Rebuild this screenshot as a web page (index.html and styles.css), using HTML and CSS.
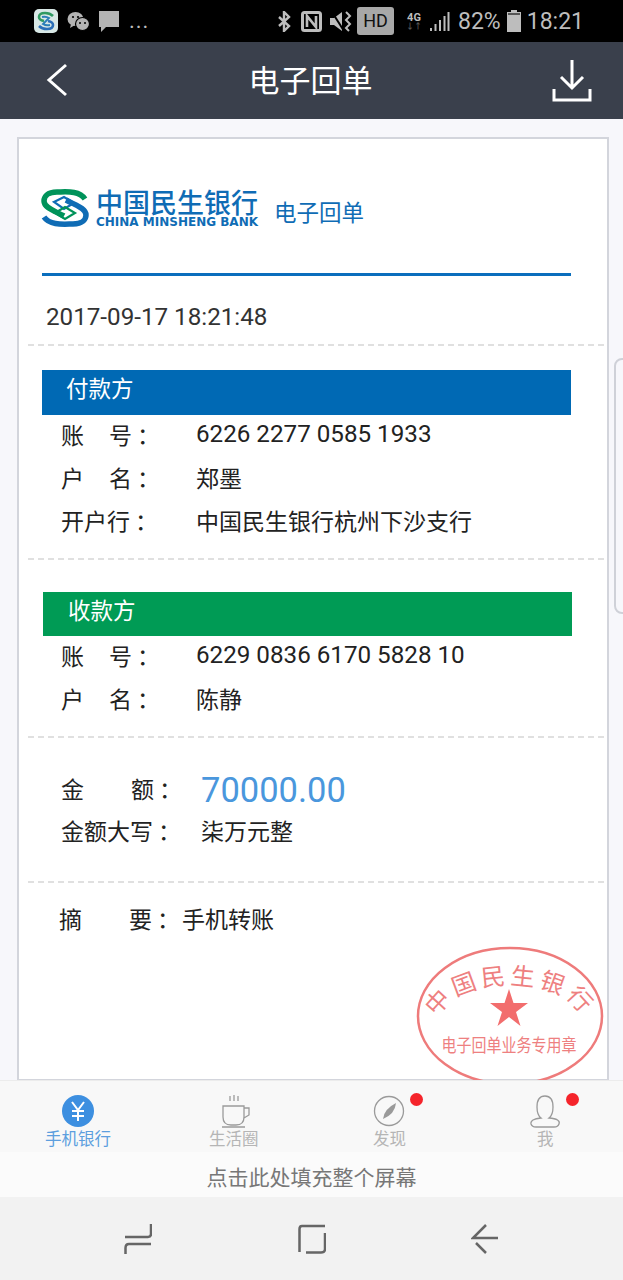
FILE: index.html
```html
<!DOCTYPE html>
<html lang="zh">
    <head>
        <meta charset="UTF-8">
        <meta name="viewport" content="width=device-width, initial-scale=1.0">
        <title>电子回单</title>
        <link rel="stylesheet" href="styles.css">
    </head>
    <body>
        <div class="status">
            <div class="status-left">
                <svg class="ic-sogou" width="24" height="24" viewBox="0 0 24 24">
                    <rect width="24" height="24" rx="5" fill="#d8e8e6"/>
                    <path d="M19 7 Q16 4 11 4 Q5 4 5 8 Q5 11 10 12" fill="none" stroke="#2f9a62" stroke-width="2.600"/>
                    <path d="M5 17 Q8 20 13 20 Q19 20 19 16 Q19 13 14 12" fill="none" stroke="#2b6fb8" stroke-width="2.600"/>
                    <path d="M8 8 Q12 7 15 9 L9 15 Q12 17 16 16" fill="none" stroke="#2b7fb8" stroke-width="2"/>
                </svg>
                <svg width="23" height="21" viewBox="0 0 23 21">
                    <ellipse cx="8.500" cy="8" rx="8" ry="7" fill="#b4b4b4"/>
                    <path d="M4 13 L3 17 L8 14 Z" fill="#b4b4b4"/>
                    <ellipse cx="15.500" cy="13" rx="7" ry="6.500" fill="#b4b4b4" stroke="#000" stroke-width="1.200"/>
                    <circle cx="13" cy="12" r="1" fill="#000"/>
                    <circle cx="18" cy="12" r="1" fill="#000"/>
                    <circle cx="6" cy="6" r="1.100" fill="#000"/>
                    <circle cx="11" cy="6" r="1.100" fill="#000"/>
                </svg>
                <svg width="20" height="21" viewBox="0 0 20 21">
                    <path d="M0 0 H20 V16 H7 L2 21 V16 H0 Z" fill="#b4b4b4"/>
                </svg>
                <span class="dots">...</span>
            </div>
            <div class="status-right">
                <svg class="ic-bt" width="13" height="21" viewBox="0 0 13 21">
                    <path d="M1 6 L11 15 L6 20 V1 L11 6 L1 15" fill="none" stroke="#bdbdbd" stroke-width="2.400"/>
                </svg>
                <svg class="ic-nfc" width="21" height="21" viewBox="0 0 21 21">
                    <rect x="1.500" y="1.500" width="18" height="18" rx="2" fill="none" stroke="#bdbdbd" stroke-width="3"/>
                    <path d="M6 16 V5 L15 16 V5" fill="none" stroke="#bdbdbd" stroke-width="2.600"/>
                </svg>
                <svg class="ic-mute" width="22" height="21" viewBox="0 0 22 21">
                    <path d="M0 7 H4 L12 1 V20 L4 14 H0 Z" fill="#bdbdbd"/>
                    <path d="M2 1 L14 20" stroke="#000" stroke-width="2"/>
                    <path d="M16 1 L20 5 L16 9 L20 13 L16 17 L19 20" fill="none" stroke="#bdbdbd" stroke-width="2"/>
                </svg>
                <span class="hd">HD</span>
                <span class="net">4G<i>↓↑</i></span>
                <svg class="ic-signal" width="20" height="19" viewBox="0 0 20 19">
                    <path d="M1 19 V16 M5.500 19 V12 M10 19 V8 M14.500 19 V4 M18.500 19 V0" stroke="#bdbdbd" stroke-width="2"/>
                </svg>
                <span class="pct">82%</span>
                <svg class="ic-batt" width="14" height="22" viewBox="0 0 14 22">
                    <rect x="4" y="0" width="6" height="3" fill="#bdbdbd"/>
                    <rect x="0" y="2" width="14" height="20" fill="#bdbdbd"/>
                    <rect x="1" y="3" width="12" height="2" fill="#555"/>
                </svg>
                <span class="clock">18:21</span>
            </div>
        </div>

        <div class="topbar">
            <svg class="back" width="24" height="34" viewBox="0 0 24 34">
                <path d="M21 2 L4 17 L21 32" fill="none" stroke="#fff" stroke-width="3"/>
            </svg>
            <h1>电子回单</h1>
            <svg class="download" width="40" height="44" viewBox="0 0 40 44">
                <path d="M20 1 V28 M9 18 L20 29 L31 18" fill="none" stroke="#fff" stroke-width="3"/>
                <path d="M2 30 V41 H38 V30" fill="none" stroke="#fff" stroke-width="3"/>
            </svg>
        </div>

        <div class="content">
            <div class="card">
                <div class="logo-row">
                    <svg class="logo-mark" width="48" height="38" viewBox="0 0 48 38">
                        <path d="M44 10 C38 1 24 3 16 3 C6 3 3 8 3 12 C3 19 14 22 23 27" fill="none" stroke="#00935a" stroke-width="5.500"/>
                        <path d="M3 28 C9 37 24 35 32 35 C42 35 45 30 45 26 C45 19 34 16 25 11" fill="none" stroke="#0f6cb5" stroke-width="5.500"/>
                        <path d="M13 13 L23 8 L33 14 L23 20 Z" fill="none" stroke="#0f6cb5" stroke-width="2.200"/>
                        <path d="M14 24 L24 18 L34 24 L24 30 Z" fill="none" stroke="#00935a" stroke-width="2.200"/>
                    </svg>
                    <div class="logo-text">
                        <div class="logo-cn">中国民生银行</div>
                        <div class="logo-en">CHINA MINSHENG BANK</div>
                    </div>
                    <div class="logo-title">电子回单</div>
                </div>
                <div class="blue-line"></div>
                <div class="date">2017-09-17 18:21:48</div>
                <div class="dash dash-date"></div>

                <div class="bar bar-pay">付款方</div>
                <div class="row row-first"><span class="label">账<i class="gap"></i>号<span class="colon">：</span></span><span class="num">6226 2277 0585 1933</span></div>
                <div class="row row-second"><span class="label">户<i class="gap"></i>名<span class="colon">：</span></span><span>郑墨</span></div>
                <div class="row row-third"><span class="label">开户行<span class="colon">：</span></span><span>中国民生银行杭州下沙支行</span></div>
                <div class="dash dash-pay"></div>

                <div class="bar bar-get">收款方</div>
                <div class="row row-first"><span class="label">账<i class="gap"></i>号<span class="colon">：</span></span><span class="num">6229 0836 6170 5828 10</span></div>
                <div class="row row-second"><span class="label">户<i class="gap"></i>名<span class="colon">：</span></span><span>陈静</span></div>
                <div class="dash dash-get"></div>

                <div class="row row-amount"><span class="label label-wide label-up">金&emsp;&emsp;额<span class="colon">：</span></span><span class="amount">70000.00</span></div>
                <div class="row row-upper"><span class="label label-wide">金额大写<span class="colon">：</span></span><span>柒万元整</span></div>
                <div class="dash dash-upper"></div>

                <div class="row row-memo"><span class="memo-label">摘&emsp;&emsp;要<span class="colon">：</span></span><span>手机转账</span></div>

                <svg class="stamp" width="190" height="140" viewBox="0 0 190 140">
                    <defs>
                        <path id="stampArc" d="M24 84 A72 38 0 1 1 166 84"/>
                    </defs>
                    <ellipse cx="95" cy="71" rx="92" ry="68" fill="none" stroke="#ee7b7b" stroke-width="2.500"/>
                    <text class="stamp-name"><textPath href="#stampArc" startOffset="50%" text-anchor="middle">中国民生银行</textPath></text>
                    <path d="M94 44 L98.500 58 L113 58 L101 67 L105.500 81 L94 72 L82.500 81 L87 67 L75 58 L89.500 58 Z" fill="#f26d6d"/>
                    <text class="stamp-sub" x="94" y="107" text-anchor="middle" textLength="135" lengthAdjust="spacingAndGlyphs">电子回单业务专用章</text>
                </svg>
            </div>
            <div class="handle"></div>
        </div>

        <div class="tabs">
            <div class="tab tab-on">
                <svg width="34" height="34" viewBox="0 0 34 34">
                    <circle cx="17" cy="17" r="16" fill="#3d8fe0"/>
                    <path d="M11 8 L17 16 L23 8 M17 16 V27 M11 17 H23 M11 22 H23" fill="none" stroke="#fff" stroke-width="2"/>
                </svg>
                <span>手机银行</span>
            </div>
            <div class="tab">
                <svg width="34" height="34" viewBox="0 0 34 34">
                    <path d="M6 12 H27 V23 Q27 31 19 31 H14 Q6 31 6 23 Z M27 14 H32 V21 L27 24 M5 33 H28 M13 2 V7 M17 1 V7 M21 2 V7" fill="none" stroke="#9a9a9a" stroke-width="1.300"/>
                </svg>
                <span>生活圈</span>
            </div>
            <div class="tab">
                <svg width="34" height="34" viewBox="0 0 34 34">
                    <circle cx="17" cy="17" r="14.500" fill="none" stroke="#9a9a9a" stroke-width="1.300"/>
                    <path d="M11 25 Q12 15 24 9 Q23 20 11 25 Z" fill="#9a9a9a"/>
                </svg>
                <span>发现</span>
                <i class="red-dot"></i>
            </div>
            <div class="tab">
                <svg width="34" height="34" viewBox="0 0 34 34">
                    <path d="M17 2 Q25 2 25 13 Q25 21 21 24 Q33 25 31 30 Q30 33 26 33 H8 Q4 33 3 30 Q2 25 13 24 Q9 21 9 13 Q9 2 17 2 Z" fill="none" stroke="#9a9a9a" stroke-width="1.300"/>
                </svg>
                <span>我</span>
                <i class="red-dot"></i>
            </div>
        </div>

        <div class="fill-row">点击此处填充整个屏幕</div>

        <div class="navbar">
            <svg width="28" height="30" viewBox="0 0 28 30">
                <path d="M27 0 V10 Q27 13 24 13 H1 M27 20 H5 Q1.500 20 1.500 24 V30" fill="none" stroke="#666" stroke-width="2.500"/>
            </svg>
            <svg width="28" height="30" viewBox="0 0 28 30">
                <path d="M27 2 H4 Q1.500 2 1.500 5 V28 M27 9 V25 Q27 28.500 23 28.500 H8" fill="none" stroke="#666" stroke-width="2.500"/>
            </svg>
            <svg width="28" height="30" viewBox="0 0 28 30">
                <path d="M15 1 L2 14 H27 M5 19 L15 29" fill="none" stroke="#666" stroke-width="2.500"/>
            </svg>
        </div>
    </body>
</html>
```

FILE: styles.css
```css
* {
    box-sizing: border-box;
}
body {
    margin: 0;
    height: 1280px;
    display: flex;
    flex-direction: column;
    overflow: hidden;
    font-family: Roboto, "Noto Sans CJK SC", sans-serif;
    color: #222;
    background-color: #f2f2f2;
}

/* status bar */
.status {
    height: 42px;
    background-color: #000;
    display: flex;
    justify-content: space-between;
    align-items: center;
    padding: 0 39px 0 34px;
    color: #bdbdbd;
    flex-shrink: 0;
}
.status-left, .status-right {
    display: flex;
    align-items: center;
}
.status-left {
    gap: 9px;
}
.dots {
    font-size: 22px;
    letter-spacing: 1px;
    margin-left: 1px;
    line-height: 20px;
}
.ic-nfc {
    margin-left: 10px;
}
.ic-mute {
    margin-left: 8px;
}
.hd {
    margin-left: 5px;
    width: 37px;
    height: 28px;
    border-radius: 3px;
    background-color: #a8a8a8;
    color: #111;
    font-size: 18px;
    line-height: 28px;
    text-align: center;
}
.net {
    margin-left: 11px;
    width: 18px;
    font-size: 11px;
    line-height: 11px;
    font-weight: 700;
    text-align: center;
}
.net i {
    display: block;
    font-style: normal;
    font-size: 8px;
    line-height: 8px;
    color: #555;
}
.ic-signal {
    margin-left: 7px;
}
.pct {
    margin-left: 8px;
    font-size: 23px;
}
.ic-batt {
    margin-left: 6px;
}
.clock {
    margin-left: 6px;
    font-size: 23px;
}

/* title bar */
.topbar {
    height: 77px;
    background-color: #3a404c;
    display: flex;
    align-items: center;
    justify-content: space-between;
    padding: 0 31px 0 45px;
    flex-shrink: 0;
}
.topbar h1 {
    margin: 0 0 5px;
    color: #fff;
    font-size: 31px;
    font-weight: 400;
}
.back {
    margin-top: -2px;
}

/* receipt */
.content {
    height: 961px;
    padding: 18px 14px 0 17px;
    background-color: #f7f7fb;
    position: relative;
    overflow: hidden;
    flex-shrink: 0;
}
.card {
    height: 943px;
    background-color: #fff;
    border: 2px solid #d3d5dc;
    border-bottom: 1px solid #d3d5dc;
    padding: 0 0 0 8px;
    position: relative;
    font-size: 23px;
}
.logo-row {
    display: flex;
    align-items: center;
    padding: 47px 0 0 14px;
    height: 88px;
}
.logo-mark {
    margin-top: 2px;
}
.logo-text {
    margin: 9px 0 0 7px;
    width: 161px;
    color: #0f6cb5;
}
.logo-cn {
    font-size: 27px;
    line-height: 21px;
    font-weight: 500;
    white-space: nowrap;
}
.logo-en {
    font-family: "DejaVu Sans", sans-serif;
    font-size: 12px;
    line-height: 14px;
    font-weight: 700;
    white-space: nowrap;
}
.logo-title {
    margin: 8px 0 0 17px;
    color: #0f6cb5;
    font-size: 22.500px;
}
.blue-line {
    height: 3px;
    width: 529px;
    margin: 46px 0 0 15px;
    background-color: #0a6ebd;
}
.date {
    margin: 24px 0 0 19px;
    height: 34px;
    line-height: 34px;
    font-size: 24.200px;
    color: #333;
}
.dash {
    height: 0;
    width: 576px;
    margin-left: 1px;
    border-top: 2px dashed #e0e0e0;
}
.dash-date {
    margin-top: 10px;
}
.bar {
    width: 529px;
    color: #fff;
    font-size: 22.500px;
    line-height: 38px;
}
.bar-pay {
    height: 45px;
    margin: 24px 0 0 15px;
    padding-left: 24px;
    background-color: #0069b4;
}
.bar-get {
    height: 44px;
    margin: 32px 0 0 16px;
    padding-left: 25px;
    background-color: #009b55;
}
.row {
    display: flex;
    align-items: center;
    height: 44px;
    padding-left: 34px;
    white-space: nowrap;
}
.row-first {
    height: 38px;
}
.row-second {
    margin-top: 2px;
}
.row-third {
    height: 42px;
}
.num {
    font-size: 24.200px;
}
.label {
    width: 135px;
    flex-shrink: 0;
}
.gap {
    display: inline-block;
    width: 25px;
}
.colon {
    padding-left: 5px;
}
.label-wide {
    width: 140px;
}
.label-up {
    margin-bottom: 5px;
}
.dash-pay {
    margin-top: 17px;
}
.dash-get {
    margin-top: 16px;
}
.row-amount {
    height: 54px;
    margin-top: 25px;
}
.amount {
    font-size: 34.500px;
    color: #4a97dd;
}
.row-upper {
    height: 30px;
    margin-top: -2px;
}
.dash-upper {
    margin-top: 36px;
}
.row-memo {
    margin-top: 13px;
    padding-left: 32px;
}
.memo-label {
    width: 123px;
    flex-shrink: 0;
}

/* stamp lies over the card */
.stamp {
    position: absolute;
    left: 396px;
    top: 806px;
}
.stamp-name {
    font-size: 24px;
    fill: #ee8080;
    letter-spacing: 4px;
}
.stamp-sub {
    font-size: 18px;
    fill: #ee8080;
}

/* drawer handle at the right edge */
.handle {
    position: absolute;
    left: 614px;
    top: 239px;
    width: 20px;
    height: 256px;
    border: 2px solid #cfd1d8;
    border-radius: 8px 0 0 8px;
    background-color: #f7f7fb;
}

/* bottom tabs */
.tabs {
    height: 72px;
    display: grid;
    grid-template-columns: repeat(4, 1fr);
    background-color: #f8f8f8;
    border-top: 1px solid #ececec;
    padding-top: 13px;
    flex-shrink: 0;
}
.tab {
    display: flex;
    flex-direction: column;
    align-items: center;
    position: relative;
    font-size: 16.500px;
    line-height: 24px;
    color: #b5b5b5;
}
.tab-on {
    color: #5c9ede;
}
.red-dot {
    position: absolute;
    left: 50%;
    margin-left: 21px;
    top: -1px;
    width: 13px;
    height: 13px;
    border-radius: 50%;
    background-color: #f5242b;
}
.fill-row {
    height: 45px;
    background-color: #fbfbfb;
    color: #777;
    font-size: 21px;
    line-height: 52px;
    text-align: center;
    flex-shrink: 0;
}
.navbar {
    flex: 1;
    background-color: #f2f2f2;
    display: flex;
    align-items: center;
    justify-content: space-between;
    padding: 0 124px;
}
```
